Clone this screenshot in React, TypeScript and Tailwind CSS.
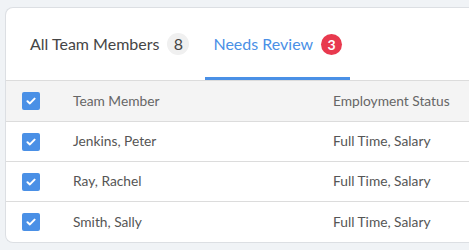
import { ReactElement } from 'react';

const rows = [
    { name: 'Jenkins, Peter', status: 'Full Time, Salary' },
    { name: 'Ray, Rachel', status: 'Full Time, Salary' },
    { name: 'Smith, Sally', status: 'Full Time, Salary' },
];

function Check(): ReactElement {
    return (
        <span className="flex h-[18px] w-[18px] items-center justify-center rounded-[2px] bg-[#4a90e6]">
            <svg width="10" height="8" viewBox="0 0 10 8" fill="none">
                <path d="M1.5 4.2 L3.9 6.4 L8.6 1.6" stroke="white" strokeWidth="2" strokeLinecap="round" strokeLinejoin="round" />
            </svg>
        </span>
    );
}

export default function App(): ReactElement {
    return (
        <div className="h-[250px] w-[469px] overflow-hidden bg-[#f0f3f6] pl-[5px] pt-[7px] font-['Lato',sans-serif]">
            <div className="w-[480px] overflow-hidden rounded-l-[8px] border border-r-0 border-[#dcdfe3] bg-white">
                {/* tabs */}
                <div className="flex h-[73px] items-end border-b border-[#dcdcdc] pl-[24px]">
                    <div className="flex h-full items-center gap-[8px] pr-[16px] text-[16px] text-[#454545]">
                        All Team Members
                        <span className="flex h-[22px] w-[22px] items-center justify-center rounded-full bg-[#f0f0f0] text-[16px] text-[#454545]">8</span>
                    </div>
                    <div className="flex h-full items-center gap-[8px] border-b-[3px] border-[#4a90e6] px-[8px] pt-[3px] text-[16px] text-[#4a90e6]">
                        Needs Review
                        <span className="flex h-[21px] w-[21px] items-center justify-center rounded-full bg-[#e8394e] text-[14px] font-bold text-white">3</span>
                    </div>
                </div>
                {/* header */}
                <div className="flex h-[41px] items-center border-b border-[#dcdcdc] bg-[#f4f4f4] text-[13.75px] text-[#666]">
                    <div className="flex w-[67px] pl-[16px]"><Check /></div>
                    <div className="w-[260px]">Team Member</div>
                    <div>Employment Status</div>
                </div>
                {rows.map((r, i) => (
                    <div key={r.name} className={`flex h-[40px] items-center text-[13.75px] text-[#555] ${i < rows.length - 1 ? 'border-b border-[#dcdcdc]' : ''}`}>
                        <div className="flex w-[67px] pl-[16px]"><Check /></div>
                        <div className="w-[260px]">{r.name}</div>
                        <div>{r.status}</div>
                    </div>
                ))}
            </div>
        </div>
    );
}
